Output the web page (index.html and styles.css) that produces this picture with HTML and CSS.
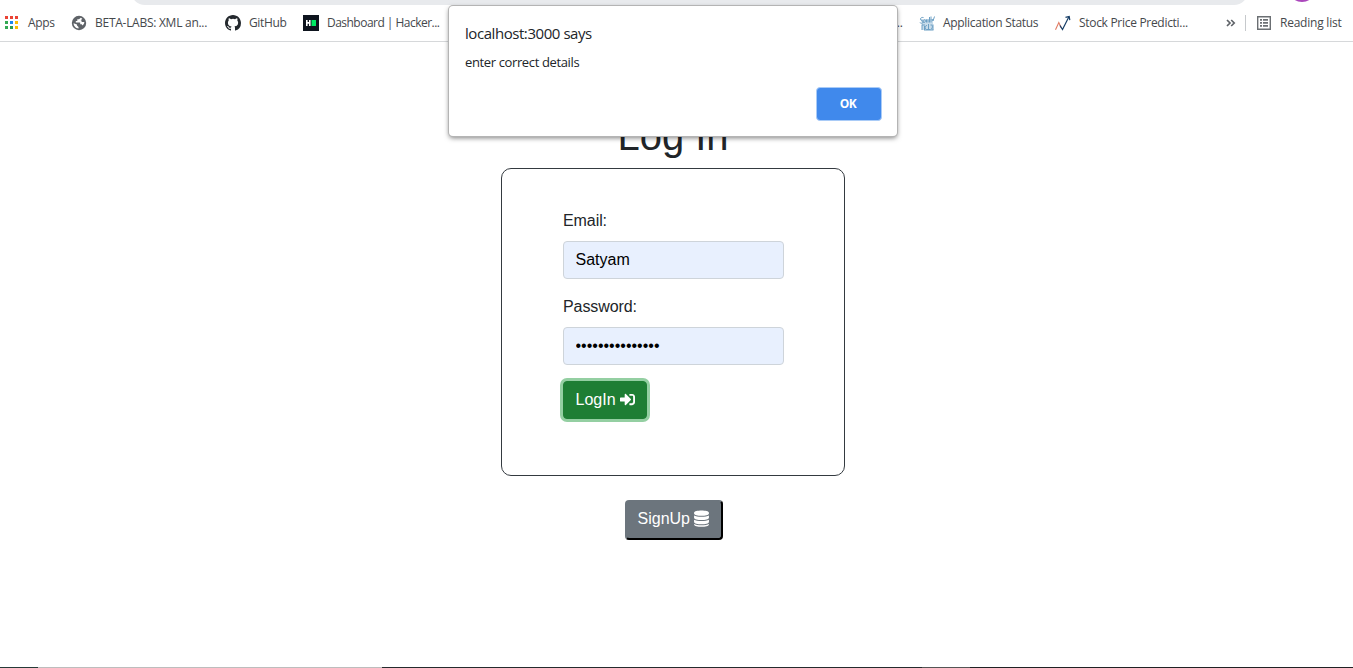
FILE: index.html
```html
<!DOCTYPE html>
<html lang="en">
<head>
<meta charset="utf-8">
<title>Log In</title>
<link rel="stylesheet" href="styles.css">
</head>
<body>
<header class="browser">
  <div class="toolbar"><div class="omnibox"></div><div class="avatar"></div></div>
  <nav class="bookmarks">
    <div class="bookmark apps">
      <svg class="icon" viewBox="0 0 16 16"><path fill="#ea4335" d="M1 1h3v3H1zM6 1h3v3H6zM11 1h3v3h-3z"/><path fill="#34a853" d="M1 6h3v3H1zM1 11h3v3H1z"/><path fill="#1a86f0" d="M6 6h3v3H6z"/><path fill="#fbbc05" d="M11 6h3v3h-3zM11 11h3v3h-3z"/><path fill="#2b9c50" d="M6 11h3v3H6z"/></svg>
      <span>Apps</span>
    </div>
    <div class="bookmark beta">
      <svg class="icon" viewBox="0 0 16 16"><circle cx="8" cy="8" r="7.200" fill="#5f6368"/><path fill="#fff" d="M9.800 2.800 8 4.300H6.300v1.600H4.800v1.500h4.400v1.800h1.500l.7 1.400c1.200-.9 2-2.100 1.900-3.500h-2.700V5.600h-1l1.700-1.900zM2.600 8.200c0 2.700 2.100 5 4.900 5.200v-1.500L6 10.600V9.400z"/></svg>
      <span>BETA-LABS: XML an...</span>
    </div>
    <div class="bookmark github">
      <svg class="icon" viewBox="0 0 16 16"><path fill="#24292e" fill-rule="evenodd" d="M8 0C3.580 0 0 3.580 0 8c0 3.540 2.290 6.530 5.470 7.590.4.070.55-.17.55-.38 0-.19-.01-.82-.01-1.490-2.010.37-2.530-.49-2.690-.94-.09-.23-.48-.94-.82-1.130-.28-.15-.68-.52-.01-.53.63-.01 1.080.58 1.230.82.72 1.210 1.870.87 2.330.66.07-.52.28-.87.51-1.070-1.780-.2-3.640-.89-3.640-3.950 0-.87.31-1.590.82-2.150-.08-.2-.36-1.020.08-2.120 0 0 .67-.21 2.200.82a7.600 7.600 0 0 1 4 0c1.530-1.040 2.200-.82 2.200-.82.44 1.100.16 1.920.08 2.120.51.56.82 1.270.82 2.150 0 3.070-1.870 3.750-3.650 3.950.29.25.54.73.54 1.480 0 1.070-.01 1.930-.01 2.200 0 .21.15.46.55.38A8 8 0 0 0 16 8c0-4.420-3.580-8-8-8z"/></svg>
      <span>GitHub</span>
    </div>
    <div class="bookmark hacker">
      <svg class="icon" viewBox="0 0 16 16"><path fill="#0e141e" d="M0 0h16v16H0z"/><path fill="#fff" d="M3 5h1.600v2H6V5h1.600v6H6V8.700H4.600V11H3z"/><path fill="#00ea64" d="M8.500 5H13v6H8.500z"/></svg>
      <span>Dashboard | Hacker...</span>
    </div>
    <div class="bookmark hidden-item"><span>Profile...</span></div>
    <div class="bookmark status">
      <svg class="icon" viewBox="0 0 16 16"><path fill="#a4c5dc" opacity=".6" d="M1 4h13v11H3V8z"/><g fill="none" stroke="#6c9fc4" stroke-width="1"><path d="M4.500 2.500C2 2 .5 4 2 5s3 1 2 2.500-3 .5-3 0M5 5c2-1 2 2.500 0 2.500S4 5.500 5 5M7.500 4.500v3M9 4.500v3M10.500 2v5.500M12 1.500v6M13 4l1 2 1.500-4.500M3 9.500v5.500M3 10h3M5.500 11v4M8 10.500c-3 0-2 4.500 0 4H11M9.500 9v5.500M11.500 10c3-1 2 4.500 0 4.500M14 9.500V15M5 15h9.500"/></g></svg>
      <span>Application Status</span>
    </div>
    <div class="bookmark stock">
      <svg class="icon" viewBox="0 0 16 16"><path fill="none" stroke="#e27b62" stroke-width="1.100" d="m.5 14.800 3.300-7.300 2.400 5.300"/><path fill="none" stroke="#173e67" stroke-width="1.200" d="m5 10.500 2.500 4L13.800 2M10.500 2.300l3.700-.9.600 3.800"/></svg>
      <span>Stock Price Predicti...</span>
    </div>
    <svg class="more" viewBox="0 0 10 8"><path fill="none" stroke="#5f6368" stroke-width="1.700" d="m1 1 3 3-3 3M5.200 1l3 3-3 3"/></svg>
    <div class="divider"></div>
    <div class="bookmark reading">
      <svg class="icon" viewBox="0 0 16 16"><path fill="none" stroke="#6b6f73" stroke-width="1.400" d="M1.700 1.700h12.600v12.600H1.700z"/><path fill="#6b6f73" d="M4 4h2v1.700H4zM7 4h5v1.700H7zM4 7h2v1.700H4zM7 7h5v1.700H7zM4 10h2v1.700H4zM7 10h5v1.700H7z"/></svg>
      <span>Reading list</span>
    </div>
  </nav>
</header>

<main class="page">
  <h1>Log In</h1>
  <form class="card">
    <label for="email">Email:</label>
    <input id="email" type="text" value="Satyam">
    <label for="password">Password:</label>
    <input id="password" type="password" value="abcdefghijklmno">
    <button class="btn login" type="button">LogIn
      <svg class="login-icon" viewBox="0 0 512 512"><path fill="currentColor" d="M416 448h-84c-6.600 0-12-5.400-12-12v-40c0-6.600 5.400-12 12-12h84c17.700 0 32-14.300 32-32V160c0-17.700-14.300-32-32-32h-84c-6.600 0-12-5.400-12-12V76c0-6.600 5.400-12 12-12h84c53 0 96 43 96 96v192c0 53-43 96-96 96zm-47-209L201 71c-15-15-41-4.500-41 17v96H24c-13.300 0-24 10.700-24 24v96c0 13.300 10.700 24 24 24h136v96c0 21.500 26 32 41 17l168-168c9.300-9.400 9.300-24.600 0-34z"/></svg></button>
  </form>
  <button class="btn signup" type="button">SignUp
    <svg class="db-icon" viewBox="0 0 14 16"><path fill="currentColor" d="M0 2.500C0-.3 14-.3 14 2.500v.8c0 2.900-14 2.900-14 0zM0 5.100c2.500 1.700 11.500 1.700 14 0v2.200c0 2.900-14 2.900-14 0zM0 9.100c2.500 1.700 11.500 1.700 14 0v2.200c0 2.900-14 2.900-14 0zM0 13.100c2.500 1.700 11.500 1.700 14 0v.6c0 2.900-14 2.900-14 0z"/></svg></button>
</main>

<footer class="taskbar"><i class="start"></i><i class="search"></i><i class="tasks"></i><i class="active"></i></footer>

<section class="dialog" role="alertdialog">
  <h2>localhost:3000 says</h2>
  <p>enter correct details</p>
  <button class="ok" type="button">OK</button>
</section>
</body>
</html>
```
FILE: styles.css
```css
* { box-sizing: border-box; }
body {
  margin: 0;
  height: 668px;
  display: flex;
  flex-direction: column;
  overflow: hidden;
  position: relative;
  background: #fff;
  color: #212529;
  font: 16px/24px "Liberation Sans", Arial, sans-serif;
}
.browser { height: 42px; border-bottom: 1px solid #d6d8da; }
.toolbar { height: 5px; display: flex; padding-left: 131px; overflow: hidden; }
.omnibox { width: 1117px; height: 28px; margin-top: -23px; border-radius: 14px; background: #e8eaed; }
.avatar { width: 28px; height: 28px; margin: -26px 0 0 40px; border-radius: 50%; background: #ab47bc; }
.bookmarks {
  height: 36px;
  display: flex;
  align-items: center;
  padding-left: 4px;
  font: 12px/16px "Open Sans", "Noto Sans", sans-serif;
  color: #45484c;
}
.bookmark { display: flex; align-items: center; gap: 8px; flex: none; white-space: nowrap; }
.icon { width: 16px; height: 16px; flex: none; }
.apps { width: 67px; letter-spacing: -.3px; }
.beta { width: 154px; letter-spacing: -.27px; }
.github { width: 78px; letter-spacing: -.35px; }
.hacker { width: 147px; letter-spacing: -.52px; }
.hidden-item { width: 469px; justify-content: flex-end; padding-right: 16px; }
.status { width: 136px; letter-spacing: -.3px; }
.stock { width: 171px; letter-spacing: -.3px; }
.more { width: 10px; height: 8px; }
.divider { width: 1px; height: 16px; margin: 0 10px 0 9px; background: #c6c9cc; }
.reading { letter-spacing: -.23px; }

.page { flex: 1; width: 344px; margin: 0 0 0 501px; padding-top: 70px; display: flex; flex-direction: column; align-items: center; }
h1 { margin: 0 0 8px; font-size: 40px; line-height: 48px; font-weight: 400; }
.card {
  width: 344px;
  height: 308px;
  padding: 40px 60px 0 61px;
  border: 1px solid #343a40;
  border-radius: 10px;
  display: flex;
  flex-direction: column;
  align-items: flex-start;
}
label { margin-bottom: 8px; letter-spacing: -.08px; }
input {
  width: 221px;
  height: 38px;
  margin: 0 0 16px;
  padding: 6px 12px 6px 11.500px;
  border: 1px solid #ced4da;
  border-radius: 4px;
  background: #e8f0fe;
  color: #000;
  font: 16px/24px "Liberation Sans", Arial, sans-serif;
}
.btn { display: flex; align-items: center; gap: 4px; border-radius: 4px; color: #fff; font: 16px/24px "Liberation Sans", Arial, sans-serif; white-space: nowrap; }
.login { width: 84px; height: 38px; padding: 6px 11.500px; border: 1px solid #1e7e34; background: #1e7e34; box-shadow: 0 0 0 3px #94cfa2; }
.login-icon { width: 15px; height: 15px; flex: none; margin-bottom: 2px; }
.signup { width: 98px; height: 40px; margin: 24px 0 0 1px; padding: 4px 11px 6px; border: 2px solid; border-color: #6c757d #000 #000 #6c757d; background: #6c757d; }
.db-icon { width: 15px; height: 17px; flex: none; margin-bottom: 2px; }

.taskbar { height: 1px; display: flex; background: #202124; }
.start { width: 38px; background: #263b38; }
.search { width: 344px; background: #bdbdbd; }
.tasks { width: 540px; background: #252b2d; }
.active { width: 48px; background: #555; }

.dialog {
  position: absolute;
  left: 449px;
  top: 6px;
  width: 448px;
  height: 130px;
  padding: 17px 15px 15px 16px;
  display: flex;
  flex-direction: column;
  border-radius: 4px;
  background: #fff;
  box-shadow: 0 0 0 1px #b4b4b4, 0 2px 5px rgba(0, 0, 0, .5);
  font-family: "Open Sans", "Noto Sans", sans-serif;
}
h2 { margin: 0; font-size: 15px; line-height: 20px; font-weight: 400; letter-spacing: -.44px; }
p { margin: 10px 0 0; font-size: 13px; line-height: 18px; letter-spacing: -.37px; }
.ok { align-self: flex-end; margin-top: auto; width: 66px; height: 34px; border: 1px solid #a9cbf7; border-radius: 4px; background: #4089ec; color: #fff; font: 700 12px/16px "Open Sans", "Noto Sans", sans-serif; letter-spacing: -.4px; padding: 0 8px 0 6px; }
```
